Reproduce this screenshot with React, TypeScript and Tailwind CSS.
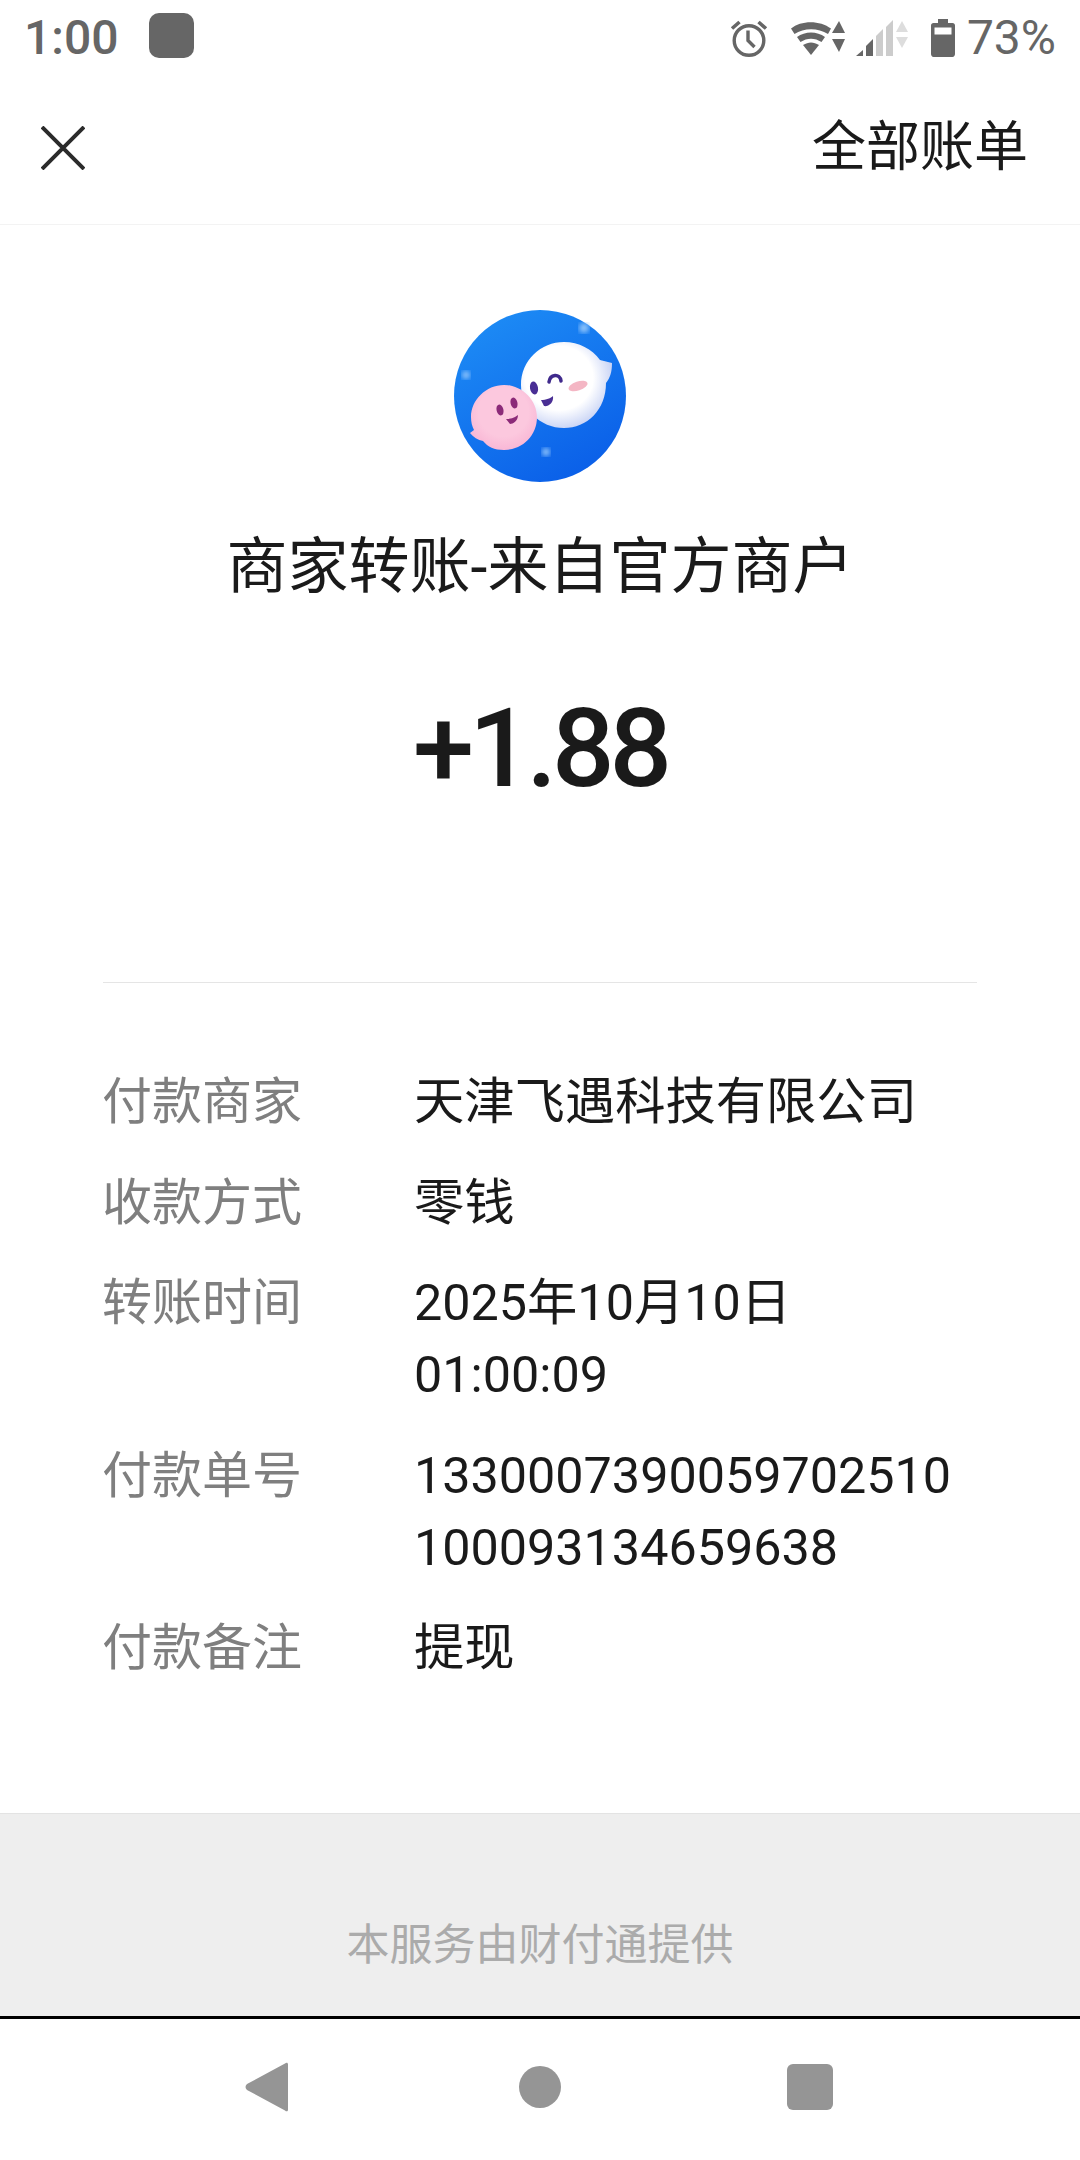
function StatusIcons() {
  return (
    <div className="flex items-center">
      {/* alarm */}
      <svg width="38" height="38" viewBox="0 0 38 38" className="mr-[23px]" fill="none" stroke="#666" strokeWidth="3.4">
        <circle cx="19" cy="21.500" r="14.800" />
        <path d="M18 11.500V21.500L24.500 28" />
        <path d="M2 9.500L9.500 3M36 9.500L28.500 3" strokeWidth="3.6" />
      </svg>
      {/* wifi */}
      <svg width="54" height="38" viewBox="0 0 54 38" className="mr-[11px]">
        <path d="M0 9.500C10 1 29 1 40 9.500L37 15C27 8.500 13 8.500 3.500 15Z" fill="#666" />
        <path d="M6 18C14 12 26 12 34 18L30.500 23C24 18.500 16 18.500 9.500 23Z" fill="#666" />
        <path d="M12 26C17.500 22.500 22.500 22.500 28 26L20 36Z" fill="#666" />
        <path d="M48 2L54 14H41Z" fill="#666" />
        <path d="M41 20H54L48 33Z" fill="#666" />
      </svg>
      {/* signal */}
      <svg width="52" height="38" viewBox="0 0 52 38" className="mr-[23px]">
        <path d="M0 37L7 31V37Z" fill="#666" />
        <path d="M10 27L17 20V37H10Z" fill="#666" />
        <path d="M20 17L27 10V37H20Z" fill="#ccc" />
        <path d="M30 8L37 1V37H30Z" fill="#ccc" />
        <path d="M46 2L52 13H40Z" fill="#ddd" />
        <path d="M40 18H52L46 29Z" fill="#ddd" />
      </svg>
      {/* battery */}
      <svg width="24" height="38" viewBox="0 0 24 38" className="mr-[12px]">
        <path d="M7 0H17V4H21.500C23 4 24 5 24 6.500V35C24 36.500 23 38 21.500 38H2.500C1 38 0 36.500 0 35V6.500C0 5 1 4 2.500 4H7Z" fill="#666" />
        <rect x="3.500" y="8.500" width="17" height="7" fill="#fff" />
      </svg>
      <span className="text-[48px] leading-none text-[#666] font-['Roboto',sans-serif]">73%</span>
    </div>
  );
}

function Avatar() {
  return (
    <svg width="172" height="172" viewBox="0 0 172 172">
      <defs>
        <linearGradient id="bg" x1="0.2" y1="0" x2="0.75" y2="1">
          <stop offset="0" stopColor="#1d8cf5" />
          <stop offset="1" stopColor="#0a5ee8" />
        </linearGradient>
        <radialGradient id="white" cx="0.42" cy="0.42" r="0.62">
          <stop offset="0.6" stopColor="#ffffff" />
          <stop offset="1" stopColor="#c3cff4" />
        </radialGradient>
        <radialGradient id="pink" cx="0.5" cy="0.42" r="0.62">
          <stop offset="0.6" stopColor="#fcc8de" />
          <stop offset="1" stopColor="#f8b4d4" />
        </radialGradient>
        <filter id="blur1"><feGaussianBlur stdDeviation="2.5" /></filter>
        <filter id="soft"><feGaussianBlur stdDeviation="0.6" /></filter>
      </defs>
      <circle cx="86" cy="86" r="86" fill="url(#bg)" />
      <circle cx="130" cy="18" r="5" fill="#8fc4fb" filter="url(#blur1)" />
      <circle cx="12" cy="65" r="4" fill="#8fc4fb" filter="url(#blur1)" />
      <circle cx="92" cy="142" r="4" fill="#8fc4fb" filter="url(#blur1)" />
      <g filter="url(#soft)">
        <path d="M67 75C67 50 87 32 110 32C125 32 138 39 146 50L158 53C158 62 156 68 152 73C152 100 133 118 110 118C86 118 67 99 67 75Z" fill="url(#white)" />
        <path d="M50 75C68 75 83 90 83 107C83 126 68 140 50 140C40 140 34 137 29 131C24 130 19 127 16 123L20 120C18 116 17 112 17 107C17 90 32 75 50 75Z" fill="url(#pink)" />
        <ellipse cx="124" cy="76" rx="10" ry="4.500" transform="rotate(-18 124 76)" fill="#f4b6c4" />
        <ellipse cx="80" cy="78" rx="4" ry="6.500" transform="rotate(-10 80 78)" fill="#4a2f94" />
        <path d="M95 72C96 64 106 63 107 71" fill="none" stroke="#3f2a8c" strokeWidth="3.500" strokeLinecap="round" />
        <path d="M87 90C92 90 97 88 99 86C100 93 94 97 90 96Z" fill="#4a2f94" />
        <ellipse cx="46" cy="100" rx="3.400" ry="5.500" transform="rotate(-15 46 100)" fill="#8b2a78" />
        <ellipse cx="60" cy="93" rx="3.400" ry="5.500" transform="rotate(-15 60 93)" fill="#8b2a78" />
        <path d="M52 109C56 109 60 108 64 105C64 111 59 114 56 114Z" fill="#8b2a78" />
      </g>
    </svg>
  );
}

const rows: { label: string; lines: string[] }[] = [
  { label: '付款商家', lines: ['天津飞遇科技有限公司'] },
  { label: '收款方式', lines: ['零钱'] },
  { label: '转账时间', lines: ['2025年10月10日', '01:00:09'] },
  { label: '付款单号', lines: ['1330007390059702510', '100093134659638'] },
  { label: '付款备注', lines: ['提现'] },
];

export default function App() {
  return (
    <div className="h-[2160px] w-[1080px] flex flex-col bg-white overflow-hidden font-['Roboto','Noto_Sans_CJK_SC',sans-serif] text-[#1a1a1a]">
      {/* Status bar */}
      <div className="h-[75px] pl-[24px] pr-[24px] flex items-center justify-between">
        <div className="flex items-center">
          <span className="text-[48px] leading-none text-[#666] font-medium mr-[30px]">1:00</span>
          <div className="w-[45px] h-[45px] rounded-[10px] bg-[#666] -mt-[5px]" />
        </div>
        <StatusIcons />
      </div>

      {/* Header */}
      <div className="h-[150px] pl-[41px] pr-[52px] pb-[3px] flex items-center justify-between border-b border-[#f3f3f3]">
        <svg width="44" height="44" viewBox="0 0 44 44" stroke="#2b2b2b" strokeWidth="4">
          <path d="M1 1L43 43M43 1L1 43" />
        </svg>
        <span className="text-[54px] leading-none">全部账单</span>
      </div>

      {/* Main */}
      <div className="flex-1 flex flex-col">
        <div className="flex flex-col items-center pt-[85px]">
          <Avatar />
          <h1 className="mt-[50px] text-[61px] leading-[70px] font-normal">商家转账-来自官方商户</h1>
          <div className="mt-[85px] text-[110px] leading-[124px] font-medium tracking-[-5px]">+1.88</div>
        </div>

        <div className="mx-[103px] mt-[171px] pt-[83px] border-t border-[#e5e5e5] flex flex-col gap-[28.5px]">
          {rows.map((r) => (
            <div key={r.label} className="flex text-[50px] leading-[72px] -ml-px">
              <div className="w-[312px] shrink-0 text-[#7f7f7f]">{r.label}</div>
              <div className="text-[50.3px]">
                {r.lines.map((l) => (
                  <div key={l}>{l}</div>
                ))}
              </div>
            </div>
          ))}
        </div>
      </div>

      {/* Footer */}
      <div className="h-[203px] bg-[#eeeeee] border-t border-[#e3e3e3] flex items-center justify-center pt-[60px]">
        <span className="text-[43px] leading-none text-[#ababab]">本服务由财付通提供</span>
      </div>

      {/* Nav bar */}
      <div className="h-[144px] border-t-[3px] border-black flex items-center pb-[5px] bg-white">
        <div className="w-[245px]" />
        <svg width="44" height="50" viewBox="0 0 44 50" fill="#959595">
          <path d="M40 1.500C41.500 0 43 0.500 43 2.500V47.500C43 49.500 41.500 50 40 48.500L2 28C0 26 0 24 2 22Z" />
        </svg>
        <div className="w-[230px]" />
        <div className="w-[42px] h-[42px] rounded-full bg-[#959595]" />
        <div className="w-[226px]" />
        <div className="w-[46px] h-[46px] rounded-[6px] bg-[#959595]" />
      </div>
    </div>
  );
}
